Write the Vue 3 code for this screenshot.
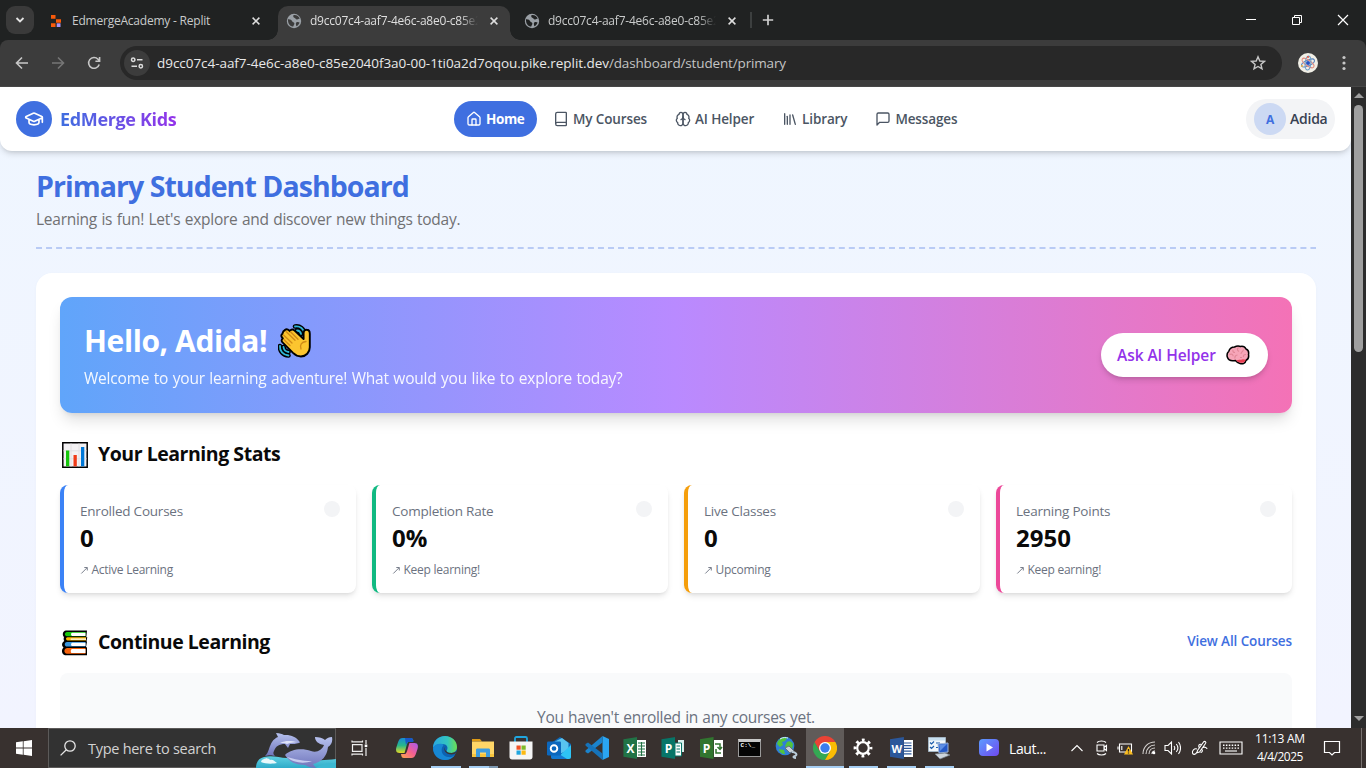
<script setup>
const tabs = [
  { title: 'EdmergeAcademy - Replit', kind: 'replit' },
  { title: 'd9cc07c4-aaf7-4e6c-a8e0-c85e2', kind: 'globe', active: true },
  { title: 'd9cc07c4-aaf7-4e6c-a8e0-c85e2', kind: 'globe' }
]
const nav = [
  { label: 'Home', active: true, d: ['M15 21v-8a1 1 0 0 0-1-1h-4a1 1 0 0 0-1 1v8', 'M3 10a2 2 0 0 1 .709-1.528l7-5.999a2 2 0 0 1 2.582 0l7 5.999A2 2 0 0 1 21 10v9a2 2 0 0 1-2 2H5a2 2 0 0 1-2-2z'] },
  { label: 'My Courses', d: ['M4 19.5v-15A2.5 2.5 0 0 1 6.5 2H19a1 1 0 0 1 1 1v18a1 1 0 0 1-1 1H6.5a1 1 0 0 1 0-5H20'] },
  { label: 'AI Helper', d: ['M12 5a3 3 0 1 0-5.997.125 4 4 0 0 0-2.526 5.77 4 4 0 0 0 .556 6.588A4 4 0 1 0 12 18Z', 'M12 5a3 3 0 1 1 5.997.125 4 4 0 0 1 2.526 5.77 4 4 0 0 1-.556 6.588A4 4 0 1 1 12 18Z', 'M15 13a4.5 4.5 0 0 1-3-4 4.5 4.5 0 0 1-3 4'] },
  { label: 'Library', d: ['m16 6 4 14', 'M12 6v14', 'M8 8v12', 'M4 4v16'] },
  { label: 'Messages', d: ['M21 15a2 2 0 0 1-2 2H7l-4 4V5a2 2 0 0 1 2-2h14a2 2 0 0 1 2 2z'] }
]
const stats = [
  { label: 'Enrolled Courses', value: '0', note: 'Active Learning', tone: 'blue' },
  { label: 'Completion Rate', value: '0%', note: 'Keep learning!', tone: 'green' },
  { label: 'Live Classes', value: '0', note: 'Upcoming', tone: 'amber' },
  { label: 'Learning Points', value: '2950', note: 'Keep earning!', tone: 'pink' }
]
</script>

<template>
  <div class="screen">
    <div class="strip">
      <div class="tabsearch"><svg width="10" height="10" viewBox="0 0 10 10"><path d="M1.5 3 5 6.5 8.5 3" fill="none" stroke="#e3e3e3" stroke-width="1.8" /></svg></div>
      <div v-for="(t, i) in tabs" :key="i" class="tab" :class="{ active: t.active }">
        <svg v-if="t.kind === 'replit'" class="fav" viewBox="0 0 16 16">
          <path d="M3 2h4.500v3.800H3zM8 6.200h5v3.600H8zM3 10.200h4.500V14H3z" fill="#f75a0b" />
          <path d="M8.700 10.300h3.800V14H8.700z" fill="#a894f5" />
        </svg>
        <svg v-else class="fav" viewBox="0 0 16 16">
          <circle cx="8" cy="8" r="7.2" fill="#9aa0a6" />
          <path d="M2 6.2c2.2-.2 3.6.6 4.2 2 .5 1.2 2.1.8 2.2 2.2.1 1.2-1 1.5-1.1 3.2-3.2-.2-5.600-3-5.300-7.400zM7.500 2c-.3 1.400-.5 2.400.8 2.700 1.500.3 1.200 1.800 2.600 1.900 1.400.1 1.500-.9 2.900-1-.9-2.400-3.300-4-6.300-3.600zM10.500 9.300c1-.5 2.300-.4 3.100.3-.6 1.900-1.700 3.100-3.200 3.700-.3-1.500-1.100-3 .1-4z" :fill="t.active ? '#3c3c3c' : '#202222'" />
        </svg>
        <span class="tabtitle" :class="{ fade: t.kind === 'globe' }">{{ t.title }}</span>
        <svg class="x" width="8" height="8" viewBox="0 0 8 8"><path d="M.6.6l6.8 6.8M7.4.6.6 7.4" stroke="#dedede" stroke-width="1.5" /></svg>
      </div>
      <i class="tabsep"></i>
      <svg class="plus" width="12" height="12" viewBox="0 0 12 12"><path d="M6 .8v10.4M.8 6h10.400" stroke="#cfcfcf" stroke-width="1.7" /></svg>
      <div class="winbtns">
        <svg width="46" height="40" viewBox="0 0 46 40"><path d="M18 19.5h10" stroke="#fff" /></svg>
        <svg width="46" height="40" viewBox="0 0 46 40"><path d="M18.500 17.500h7v7h-7zM20.500 17.500v-2h7v7h-2" fill="none" stroke="#fff" /></svg>
        <svg width="46" height="40" viewBox="0 0 46 40"><path d="m18 15 10 10M28 15 18 25" stroke="#fff" stroke-width="1.2" /></svg>
      </div>
    </div>

    <div class="toolbar-wrap"><div class="toolbar">
      <svg class="tb" viewBox="0 0 16 16"><path d="M14 8H2.800M8 2.500 2.500 8 8 13.500" stroke="#c7c7c7" /></svg>
      <svg class="tb" viewBox="0 0 16 16"><path d="M2 8h11.200M8 2.500 13.500 8 8 13.500" stroke="#767676" /></svg>
      <svg class="tb" viewBox="0 0 16 16"><path d="M13.200 9.500a5.400 5.400 0 1 1-1.200-5.300l1.500 1.600M13.600 2v4.200H9.400" stroke="#c7c7c7" /></svg>
      <div class="omni">
        <div class="site"><svg width="14" height="14" viewBox="0 0 14 14" fill="none" stroke="#dcdcdc" stroke-width="1.5"><circle cx="3.2" cy="3.7" r="1.7" /><path d="M7 3.700h5.500M1.500 10.300H7" /><circle cx="10.8" cy="10.3" r="1.7" /></svg></div>
        <span class="host">d9cc07c4-aaf7-4e6c-a8e0-c85e2040f3a0-00-1ti0a2d7oqou.pike.replit.dev</span><span class="path">/dashboard/student/primary</span>
        <svg class="star" width="16" height="16" viewBox="0 0 16 16"><path d="m8 1.800 1.800 4.200 4.600.4-3.500 3 1.100 4.500L8 11.500l-4 2.400 1.100-4.500-3.500-3 4.600-.4z" fill="none" stroke="#c7c7c7" stroke-width="1.4" /></svg>
      </div>
      <svg class="profile" width="20" height="20" viewBox="0 0 20 20">
        <circle cx="10" cy="10" r="10" fill="#f1efe6" />
        <g fill="none" stroke-width="1.1"><ellipse cx="10" cy="10" rx="7" ry="2.8" stroke="#5b84bd" transform="rotate(-25 10 10)" /><ellipse cx="10" cy="10" rx="7" ry="2.8" stroke="#e58a7c" transform="rotate(35 10 10)" /><ellipse cx="10" cy="10" rx="7" ry="2.8" stroke="#6d9fc9" transform="rotate(95 10 10)" /></g>
        <circle cx="10" cy="10" r="2" fill="#2452c4" /><circle cx="10" cy="4" r="1" fill="#e2503b" /><circle cx="4" cy="13" r="1" fill="#eeb23c" />
      </svg>
      <svg class="kebab" width="4" height="16" viewBox="0 0 4 16" fill="#c7c7c7"><circle cx="2" cy="2.5" r="1.6" /><circle cx="2" cy="8" r="1.6" /><circle cx="2" cy="13.5" r="1.6" /></svg>
    </div></div>

    <div class="viewport">
      <div class="page">
        <header>
          <div class="brand">
            <div class="logo"><svg width="20" height="20" viewBox="0 0 24 24" class="line"><path d="M21.42 10.922a1 1 0 0 0-.019-1.838L12.83 5.18a2 2 0 0 0-1.66 0L2.6 9.08a1 1 0 0 0 0 1.832l8.57 3.908a2 2 0 0 0 1.66 0zM22 10v6M6 12.5V16a6 3 0 0 0 12 0v-3.5" /></svg></div>
            <span>EdMerge Kids</span>
          </div>
          <nav>
            <a v-for="n in nav" :key="n.label" :class="{ on: n.active }">
              <svg width="16" height="16" viewBox="0 0 24 24" class="line"><path v-for="d in n.d" :key="d" :d="d" /></svg><span>{{ n.label }}</span>
            </a>
          </nav>
          <div class="user"><b>A</b><span>Adida</span></div>
        </header>

        <main>
          <div class="intro">
            <h1>Primary Student Dashboard</h1>
            <p>Learning is fun! Let's explore and discover new things today.</p>
          </div>
          <svg class="dash" width="1280" height="2"><line x1="0" y1="1" x2="1280" y2="1" stroke="#b9cbf5" stroke-width="2" stroke-dasharray="6 4.035" /></svg>

          <section class="board">
            <div class="banner">
              <div>
                <h2><span>Hello, Adida!</span>
                  <svg width="34" height="36" viewBox="0 0 34 36">
                    <g fill="none" stroke-linecap="round"><path d="M17 3.500c5-.8 9 2.200 9.500 7.500M19 7.500c2.200.1 3.700 1.500 4 3.500M2 23c-.5 5 3 9 8.500 9.500M5.500 24c.2 2.700 2 4.500 5 5" stroke="#000" stroke-width="4.6" /><path d="M17 3.500c5-.8 9 2.200 9.500 7.500M19 7.500c2.200.1 3.700 1.500 4 3.500M2 23c-.5 5 3 9 8.500 9.500M5.500 24c.2 2.700 2 4.500 5 5" stroke="#2fb6d6" stroke-width="1.8" /></g>
                    <path d="M7 7c1.800-1.600 3-.6 4.500.8l.5.4c.8-2 3-2.200 4.600-.6l9 8.400V10.500c0-2.600 1-3.800 3-3.700 2.300 0 3.200 1.600 3.200 4v13.500c0 5-3.800 9.200-8.900 9.200-3.400 0-5.600-1.400-7.900-3.600L4.800 19.700c-1.600-1.600-1.600-3 .1-4.200-2-1.900-2.200-3.300-.5-4.700C4.800 8.700 5.500 7.600 7 7z" fill="#fcc52f" stroke="#000" stroke-width="1.9" stroke-linejoin="round" />
                    <path d="m5.500 12 8.500 8M8 8.500l9 8.700M12.500 8.800l7.500 7.400M5.800 16.500l6.200 6M28 18.500c-4.500.4-6.600 3.600-5 7.500" fill="none" stroke="#d08a16" stroke-width="1.3" stroke-linecap="round" />
                  </svg>
                </h2>
                <p>Welcome to your learning adventure! What would you like to explore today?</p>
              </div>
              <button><span>Ask AI Helper</span>
                <svg width="24" height="20" viewBox="0 0 24 20">
                  <path d="M8.500 2C11 .5 13.500 1 14.500 1.500c2.500-.5 4.500.5 5.500 2.500 2.200 1 3 3.200 2.500 5.500.5 2.500-.5 5-2.600 6-.5 2.700-3 4-5.900 3-2.100-.5-3.600-1.800-4.600-3-3.400.7-6.900.2-8-3.200-.9-2.800.1-4.800 1.400-6C3.600 3.500 5.800 2 8.500 2z" fill="#f6a5b8" stroke="#000" stroke-width="1.5" />
                  <path d="M10 15.500c2.300-1 4.800-.4 6.800-1.200l3 .4c-.8 2.400-2.900 3.700-5.700 2.800-1.700-.3-3-1.100-4.100-2z" fill="#e83e52" />
                  <path d="M7 5c-.5 1.500.5 2.500 2 2.500M12.500 2.500c-1.500 1.300-1.500 3 .5 4M17.500 4.500c-.5 2.500-2.500 2.500-2.500 4.500M3.500 9.500c2-1 3.500 0 3.700 1.800M9 13.500c-.5-2 .5-3.300 2.500-3.500M20 9.500c-2-.3-3 1.200-2.500 2.700M14 12.500h2" fill="none" stroke="#e08797" stroke-width="1.1" />
                </svg>
              </button>
            </div>

            <h3>
              <svg width="28" height="28" viewBox="0 0 28 28"><path d="M1.800 1.800h24.400v24.400H1.800z" fill="#f3f1f3" stroke="#000" stroke-width="1.5" /><path d="M2.500 9.800h23M2.500 17.800h23M10 2.500v23M18 2.500v23" stroke="#e2e0e3" /><path d="M5 9.500h3.300v15.800H5z" fill="#16c60c" /><path d="M12.500 14h3.300v11.300h-3.300z" fill="#f03a17" /><path d="M20 6h3.300v19.300H20z" fill="#0078d7" /></svg>
              <span>Your Learning Stats</span>
            </h3>
            <div class="cards">
              <article v-for="s in stats" :key="s.tone" :class="s.tone">
                <p class="label">{{ s.label }}</p>
                <p class="value">{{ s.value }}</p>
                <p class="note"><svg width="9" height="9" viewBox="0 0 9 9"><path d="M1.300 7.500 7 1.800M4.300 1.500h3v3" fill="none" stroke="#6b7280" stroke-width=".9" /></svg><span>{{ s.note }}</span></p>
                <i></i>
              </article>
            </div>

            <h3 class="second">
              <svg width="28" height="28" viewBox="0 0 28 28">
                <path d="M26 1.500H5C1.500 2 1 6 3 8c-.5 1.500-.5 3 .3 4C.5 13.500.5 17 2.500 18.500 0 20.500.5 25.500 4 26.200h22v-8h-1l1-5.500-.5-.500.800-4h-1z" fill="#000" />
                <path d="M24.500 2.900H6c-2.800.3-2.800 4 0 4.300h18.500z" fill="#16c60c" />
                <path d="M25 8.300H6.500c-2 .2-2 2.900 0 3.200H25z" fill="#ffb900" />
                <path d="M24.500 12.900H6c-3 .4-3 4.300 0 4.700h18.500z" fill="#3a96dd" />
                <path d="M24.500 19H6c-3.500.5-3.500 5.400 0 5.800h18.500z" fill="#f7630c" />
                <path d="M24.500 3.700H11c-1.300.4-1.300 2.800 0 3.200h13.500zM25 9.500H10c-.6.300-.6 1 0 1.300h15zM24.500 13.800H11c-1.300.4-1.300 2.900 0 3.300h13.500zM24.500 19.900H11c-1.600.5-1.600 3.700 0 4.200h13.500z" fill="#fff" />
              </svg>
              <span>Continue Learning</span>
              <a>View All Courses</a>
            </h3>
            <div class="empty">You haven't enrolled in any courses yet.</div>
          </section>
        </main>
      </div>
      <div class="scroll"><i class="up"></i><i class="thumb"></i><i class="down"></i></div>
    </div>

    <footer>
      <div class="start"><svg width="16" height="16" viewBox="0 0 16 16" fill="#fff"><path d="M0 2.300 6.800 1.300v6.300H0zM7.600 1.200 16 0v7.600H7.600zM0 8.400h6.800v6.300L0 13.700zM7.600 8.400H16V16l-8.400-1.200z" /></svg></div>
      <div class="search">
        <svg width="16" height="16" viewBox="0 0 16 16" fill="none" stroke="#e6e6e6" stroke-width="1.3"><circle cx="10" cy="6" r="5.2" /><path d="M6.300 9.700.6 15.400" /></svg>
        <span>Type here to search</span>
        <svg class="dolphins" width="80" height="36" viewBox="0 0 80 36">
          <defs>
            <linearGradient id="dolphinSkin" x1="0" y1="0" x2="0" y2="1"><stop offset="0" stop-color="#b6c1ee" /><stop offset="1" stop-color="#6f74bb" /></linearGradient>
            <linearGradient id="sea" x1="0" y1="0" x2="0" y2="1"><stop offset="0" stop-color="#5fd0e2" /><stop offset="1" stop-color="#2fabc9" /></linearGradient>
          </defs>
          <path d="M0 36c0-6 3-10 8-11 9-2 15 1 23 1 10 0 16-1 23 1 9 2 16 1 26 0v9z" fill="url(#sea)" />
          <path d="M5 30c1-4 4-2 5-4 2 1 3 0 4 2 3-1 4 1 7 3-4 1-12 1-16-1z" fill="#e8f8fb" />
          <path d="M9 24c2-2 3-4 4-7 2-6 4-10 9-12l-2-4c4 0 6 1 8 2 7-.5 12 2 15 6 1 1 1 2 0 2-3 1-6 1-9 1l-2 4-3-4c-6 0-9 2-11 7-1 2-1 3 1 5-4-1-6-1-10 0z" fill="url(#dolphinSkin)" />
          <path d="M24 11c6-3 11-2 18-1l-8 1-3 1-3-1z" fill="#dfe3f8" />
          <path d="M29 23c6-6 17-7 26-4 6 2 11-1 13-6-6-1-9-4-9-8 4 0 8 1 10 3 2-2 4-3 7-3 1 5-1 8-4 10-1 9-6 15-15 17l3 4c-4 0-8-1-11-3-9 0-16-3-20-10z" fill="url(#dolphinSkin)" />
          <path d="M31 25c8 2 14 4 25 4-8 3-19 2-25-4z" fill="#c8cdf0" />
          <path d="M60 36c5-4 12-5 20-5v5z" fill="#3bb8d2" />
        </svg>
      </div>
      <div class="task"><svg width="18" height="16" viewBox="0 0 18 16" fill="none" stroke="#eee" stroke-width="1.2"><path d="M1.500 4.600h9.500v6.800H1.500zM1 .5v1.400h10.500V.5M1 15.500v-1.400h10.500v1.400M15 0v4M15 8v8" /><path d="M13.700 4.500h2.600v2.600h-2.600z" fill="#fff" stroke="none" /></svg></div>

      <div class="apps">
        <div><svg width="24" height="24" viewBox="0 0 24 24"><defs><linearGradient id="cpA" x1="0" y1="0" x2="0" y2="1"><stop offset="0" stop-color="#168bd6" /><stop offset=".5" stop-color="#28b88a" /><stop offset="1" stop-color="#e5da24" /></linearGradient><linearGradient id="cpB" x1="1" y1="0" x2="0" y2="1"><stop offset="0" stop-color="#a85af0" /><stop offset=".5" stop-color="#f45f90" /><stop offset="1" stop-color="#fba94b" /></linearGradient></defs><path d="M7.500 2H16c1.500 0 2 1 2.500 3h-4C12 5 11 13 9.500 17H4.500C1 17 .5 14 1.500 11 3 7 3.500 2 7.500 2z" fill="url(#cpA)" /><path d="M10 2h6c1.500 0 2 1 2.500 4h-5C12 6 11.500 8 11 9.500z" fill="#1857c7" /><path d="M16.500 22H9c-2 0-2.500-1-3-4h4C12 18 13 11 14.500 7H19.500c3.500 0 4 3 3 6-1.500 4-2 9-6 9z" fill="url(#cpB)" /></svg></div>
        <div class="run w30"><svg width="24" height="24" viewBox="0 0 24 24"><defs><linearGradient id="edgeG" x1="0" y1="0" x2="1" y2="0"><stop offset="0" stop-color="#2ba6df" /><stop offset=".6" stop-color="#33c6c0" /><stop offset="1" stop-color="#6ddf50" /></linearGradient></defs><circle cx="12" cy="12" r="12" fill="#0d62b1" /><path d="M0 12C0 5 5 0 12 0s12 5 12 11c0 4-3 6-6.500 6-3 0-4.500-1.500-3.500-3 1.500-3-.5-6-4.500-6C5 8 1 10 0 12z" fill="url(#edgeG)" /><path d="M10 10c-3 4-1 10 5 11 3 .5 5-.5 7-2-2 3-6 5-10 5C5 24 0 18.500 0 12c1-3 4.500-4.500 8-4.200 2 .2 3 1 2 2.200z" fill="#1787d4" /><path d="M12.500 10.500c-1.500 2.500 0 5.500 4 6.300 3 .4 5-.3 7-1.500l-1 2.200c-3 1.200-6 1.500-9-.5-2.500-1.700-2.500-4.500-1-6.500z" fill="#3a3432" /></svg></div>
        <div class="run split w29"><svg width="22" height="20" viewBox="0 0 22 20"><path d="M0 1h8l2 2.500H0z" fill="#df9b16" /><path d="M0 3.500h22V19H0z" fill="#ffd667" /><path d="M0 16h22v3H0z" fill="#f8c43c" /><path d="M4 19v-7c0-1 .5-1.500 1.500-1.500h11c1 0 1.500.5 1.500 1.500v7h-4v-4.500H8V19z" fill="#3d9ce0" /></svg></div>
        <div><svg width="24" height="24" viewBox="0 0 24 24"><path d="M6 6V2.500C6 1.500 6.500 1 7.500 1h9c1 0 1.500.5 1.500 1.500V6" fill="none" stroke="#20a6df" stroke-width="1.8" /><path d="M.5 5.500h23V21c0 1.500-1 2.500-2.500 2.500H3C1.500 23.500.5 22.500.5 21z" fill="#f5f5f5" /><path d="M7.500 9.500h4.200v4.200H7.500z" fill="#f15125" /><path d="M12.500 9.500h4.200v4.200h-4.200z" fill="#7eba28" /><path d="M7.500 14.500h4.200v4.200H7.500z" fill="#20a6df" /><path d="M12.500 14.500h4.200v4.200h-4.200z" fill="#fcb912" /></svg></div>
        <div><svg width="24" height="24" viewBox="0 0 24 24"><path d="m13 1 11 7v13c0 1-1 2-2 2H6c-1 0-2-1-2-2V7z" fill="#1066b5" /><path d="M8 5.500 15 2l6.500 5v7L8 20z" fill="#59c3f0" /><path d="M24 9v12c0 1-1 2-2 2H9z" fill="#2ec4f5" /><path d="M4 13 20 23H6c-1 0-2-1-2-2z" fill="#1479d1" /><rect y="5.5" width="14" height="14" rx="1.2" fill="#0b67bd" /><circle cx="7" cy="12.5" r="3.3" fill="none" stroke="#fff" stroke-width="1.9" /></svg></div>
        <div><svg width="24" height="24" viewBox="0 0 24 24"><path d="M17.500 0 24 3v18l-6.500 3z" fill="#2aa5f2" /><path d="M17.500 0v6.500L3 17.500.5 16v-1.500z" fill="#1b83cc" /><path d="M17.500 24v-6.500L3 6.500.5 8v1.500z" fill="#1673ba" /></svg></div>
        <div><div class="office xl"><b>X</b><svg width="9" height="17" viewBox="0 0 9 17"><path d="M0 0h9v17H0z" fill="#fff" /><path d="M1 3h7M1 6h7M1 9h7M1 12h7M1 15h7M4.500 2v14" stroke="#217346" stroke-width="1.1" /></svg></div></div>
        <div><div class="office pub"><b>P</b><svg width="9" height="17" viewBox="0 0 9 17"><path d="M3 0h6v12H3z" fill="#d8efec" /><path d="M0 3h6.500v13H0z" fill="#fff" stroke="#077568" /><path d="M1.500 6h3.500M1.500 9h3.500M1.500 12h3.500" stroke="#077568" /></svg></div></div>
        <div><div class="office proj"><b>P</b><svg width="9" height="17" viewBox="0 0 9 17"><path d="M0 0h9v17H0z" fill="#fff" /><path d="M1 4h5v5M3.500 7 6 9.500 8 7M7 13H2V9" fill="none" stroke="#31752f" stroke-width="1.5" /></svg></div></div>
        <div><div class="cmd">C:\_</div></div>
        <div><svg width="24" height="24" viewBox="0 0 24 24"><circle cx="10" cy="10" r="9.3" fill="#2f7fd6" /><path d="M3 5c3-4 7-4 9-3l-2 3-3 1 1 3-3 2-3-3zM12 6c3-2 5 0 6 2l-1 5-4 1-3-4zM4 13l5 1 1 4C7 18 4 16 4 13z" fill="#52c33c" /><path d="M5 3c3-2 6-1.500 8-1" stroke="#d6f2ff" fill="none" /><path d="m10 12 4-2 5 5-4 2z" fill="#c8d1d8" stroke="#65727c" /><path d="M17 16c4 0 6 3 3 4s-1 2 1 2" fill="none" stroke="#b9cbd8" stroke-width="2" /></svg></div>
        <div class="run chrome"><svg width="24" height="24" viewBox="0 0 24 24"><path d="m12 12 5.200 3L12 24A12 12 0 0 1 1.600 6l5.200 9z" fill="#34a853" /><path d="M12 6h10.400a12 12 0 0 0-20.800 0l5.200 9z" fill="#ea4335" /><path d="M17.200 15 12 24A12 12 0 0 0 22.400 6H12z" fill="#fbbc04" /><circle cx="12" cy="12" r="6" fill="#fff" /><circle cx="12" cy="12" r="4.7" fill="#3b7ded" /></svg></div>
        <div class="run w29"><svg width="20" height="20" viewBox="0 0 20 20" fill="none" stroke="#fff"><circle cx="10" cy="10" r="5.8" stroke-width="2.2" /><circle cx="10" cy="10" r="8" stroke-width="2.8" stroke-dasharray="2.8 3.483" stroke-dashoffset="1.4" /></svg></div>
        <div class="run w29"><div class="office word"><b>W</b><svg width="9" height="17" viewBox="0 0 9 17"><path d="M0 0h9v17H0z" fill="#fff" /><path d="M0 3h7.500M0 5.700h7.500M0 8.400h7.500M0 11.100h7.500M0 13.800h7.500" stroke="#2b579a" stroke-width="1.2" /></svg></div></div>
        <div class="run w29"><svg width="24" height="24" viewBox="0 0 24 24"><path d="M1.500 1.500h17v14h-17z" fill="#f2f7fb" stroke="#a3b5c4" /><path d="M2 2h16v2.500H2z" fill="#c7dff0" /><path d="m3 6.500 1.500 1.500L7 5.500M3 11l1.500 1.500L7 10M9 7h4M9 11.500h3" stroke="#1d5dab" fill="none" stroke-width="1.2" /><path d="m11 8 10-1v9l-9 1z" fill="#2459c8" stroke="#9db4d8" /><path d="m12 8.500 8-.5-7 7z" fill="#5d8fe6" /><path d="m8 18 10-1 5 2-10 4z" fill="#cdd5dd" stroke="#75818d" stroke-width=".7" /></svg></div>
      </div>

      <div class="widget"><svg width="20" height="18" viewBox="0 0 20 18"><defs><linearGradient id="play" x1="0" y1="0" x2="1" y2="1"><stop offset="0" stop-color="#5b9cff" /><stop offset="1" stop-color="#7048ee" /></linearGradient></defs><rect width="20" height="17" rx="4" fill="url(#play)" /><path d="M7.500 4.500v8l6.500-4z" fill="#fff" /></svg><span>Laut...</span></div>
      <div class="tray">
        <svg class="s0" width="14" height="20" viewBox="0 0 14 20"><path d="M1.500 13 7 7.500l5.500 5.500" /></svg>
        <svg class="s1" width="14" height="20" viewBox="0 0 14 20"><path d="M2 7h7v6H2zM9 9.500l2.500-2v5L9 10.500M2 4.500C4 2.500 9 2.500 11 4.500M2 15.500c2 2 7 2 9 0" /></svg>
        <svg class="s2" width="18" height="20" viewBox="0 0 18 20"><path d="M2.500 6h12v8h-12zM1 8.500v3M4.800 8v4" /><path d="m11.500 8 4.500 8.500H7z" fill="#fbbd20" stroke="none" /><path d="M11.500 11v2.500M11.500 14.500v1" stroke="#222" stroke-width="1.3" /></svg>
        <svg class="s3" width="14" height="20" viewBox="0 0 14 20"><path d="M1 16C1 9 6 4 13 4M4 16c0-5 4-9 9-9M7 16c0-3.500 2.500-6 6-6" stroke="#d5d2d0" /><path d="M10 16c0-1.800 1.200-3 3-3" /><circle cx="12" cy="15" r="1.3" fill="#fff" stroke="none" /></svg>
        <svg class="s4" width="17" height="20" viewBox="0 0 17 20"><path d="M1 7.500h3L7.500 4v12L4 12.500H1zM10 8c1 1.300 1 2.700 0 4M12.300 6c2 2.500 2 5.500 0 8M14.500 4c2.700 3.500 2.700 8.500 0 12" /></svg>
        <svg class="s5" width="17" height="20" viewBox="0 0 17 20"><path d="M6.500 12.500 12.500 4c1.500-1.500 3 0 2 1.500L8.500 14l-2.500.800zM6 11c-3-1-5 2-4.500 4s3 2 4.500-1M8 9.500C7 7 9 5.500 10 6.500M12 9.500c2-1 4 .500 4 1.500M11 11.500c1 1.500 0 3-1.500 3" /></svg>
        <svg class="s6" width="24" height="20" viewBox="0 0 24 20"><path d="M1 4h22v12H1z" /><path d="M4 7.300h16M4 10.100h16" stroke-width="1.400" stroke-dasharray="1.500 1.400" /><path d="M6 13h12" /></svg>
      </div>
      <div class="clock"><span>11:13 AM</span><span class="date">4/4/2025</span></div>
      <svg class="notif" width="18" height="18" viewBox="0 0 18 18"><path d="M1.500 2.500h15v11h-5L9 16l-2.500-2.500h-5z" fill="none" stroke="#fff" stroke-width="1.2" /></svg>
      <i class="edge"></i>
    </footer>
  </div>
</template>

<style>
body { margin: 0; overflow: hidden; }
</style>

<style scoped>
* { box-sizing: border-box; }
.screen { width: 1366px; height: 768px; display: grid; grid-template-rows: 40px 47px 641px 40px; overflow: hidden; white-space: nowrap; font-family: "Open Sans", "Noto Sans", sans-serif; }
svg { flex: none; display: block; }
h1, h2, h3, p { margin: 0; }

.strip { background: #202222; display: flex; align-items: center; }
.tabsearch { width: 28px; height: 28px; margin-left: 6px; border-radius: 9px; background: #3a3a3a; display: grid; place-items: center; }
.tab { height: 34px; align-self: flex-end; display: flex; align-items: center; padding: 0 12px 5px 8px; width: 232px; color: #c9cbcb; position: relative; }
.tabsearch + .tab { margin: 0 6px; }
.tab.active { background: #3c3c3c; color: #dfdfdf; border-radius: 10px 10px 0 0; }
.tab.active + .tab { margin-left: 6px; }
.tab.active::before, .tab.active::after { content: ""; position: absolute; bottom: 0; width: 10px; height: 10px; }
.tab.active::before { left: -10px; background: radial-gradient(circle at 0 0, transparent 9.5px, #3c3c3c 10px); }
.tab.active::after { right: -10px; background: radial-gradient(circle at 100% 0, transparent 9.5px, #3c3c3c 10px); }
.fav { width: 16px; height: 16px; margin-right: 8px; }
.tabtitle { font-size: 12px; letter-spacing: -.22px; flex: 1; overflow: hidden; line-height: 20px; }
.fade { -webkit-mask: linear-gradient(90deg, #000 150px, transparent 168px); mask: linear-gradient(90deg, #000 150px, transparent 168px); }
.x { margin: 1px 0 0 8px; }
.tabsep { width: 2px; height: 16px; background: #3c3f3f; margin-left: 2px; }
.plus { margin-left: 10px; }
.winbtns { margin-left: auto; display: flex; }

.toolbar-wrap { background: #202222; }
.toolbar { height: 47px; background: #3c3c3c; border-radius: 8px 8px 0 0; border-bottom: 1px solid #474747; display: flex; align-items: center; padding-left: 14px; }
.tb { width: 16px; height: 16px; margin-right: 20px; fill: none; stroke-width: 1.6; }
.tb:nth-child(3) { margin-right: 18px; }
.omni { width: 1162px; height: 34px; border-radius: 17px; background: #282828; display: flex; align-items: center; padding-left: 4px; color: #e8e8e8; font-size: 13.5px; }
.site { width: 26px; height: 26px; border-radius: 50%; background: #3c3c3c; display: grid; place-items: center; margin-right: 7px; }
.host { letter-spacing: -.05px; }
.path { letter-spacing: -.15px; color: #c4c4c4; }
.host, .path { padding-bottom: 1px; }
.star { margin: 0 16px 0 auto; }
.profile { margin-left: 16px; }
.kebab { margin-left: 24px; }

.viewport { display: flex; overflow: hidden; }
.page { width: 1351px; background: linear-gradient(#eff6ff, #f2f4ff); overflow: hidden; }
header { height: 64px; background: #fff; border-radius: 0 0 12px 12px; box-shadow: 0 4px 6px -1px rgba(0,0,0,.13), 0 2px 4px -2px rgba(0,0,0,.13); display: flex; align-items: center; padding: 0 16px; position: relative; }
.line { fill: none; stroke: currentColor; stroke-width: 2; stroke-linecap: round; stroke-linejoin: round; }
.brand { display: flex; align-items: center; width: 438px; font-size: 18px; font-weight: 700; letter-spacing: -.35px; }
.brand span { background: linear-gradient(90deg, #3f6fe0, #9333ea); -webkit-background-clip: text; background-clip: text; color: transparent; }
.logo { width: 36px; height: 36px; border-radius: 50%; background: #3f6fe0; color: #fff; display: grid; place-items: center; margin-right: 8px; }
nav { display: flex; gap: 4px; }
nav a { height: 36px; padding: 0 12px; border-radius: 18px; display: flex; align-items: center; gap: 4px; font-size: 13.5px; font-weight: 600; letter-spacing: -.13px; color: #4b5563; }
nav a span, .user span { padding-bottom: 1px; }
nav a.on { background: #3f6fe0; color: #fff; font-weight: 700; letter-spacing: -.4px; width: 83px; }
.user { margin-left: auto; height: 40px; width: 89px; border-radius: 20px; background: #f3f4f6; display: flex; align-items: center; padding-left: 8px; font-size: 14px; font-weight: 600; letter-spacing: -.25px; color: #374151; }
.user b { width: 32px; height: 32px; border-radius: 50%; background: #ccd9f3; color: #3f6fe0; display: grid; place-items: center; margin-right: 4px; font-size: 12px; font-weight: 700; }

main { padding: 0 35px 0 36px; }
.intro { padding-top: 17px; }
h1 { font-size: 28.5px; line-height: 36px; font-weight: 700; letter-spacing: -.95px; color: #3f6fe0; }
.intro p { font-size: 15.5px; line-height: 24px; letter-spacing: -.26px; word-spacing: .7px; color: #717173; margin-top: 3px; }
.dash { margin: 16px 0 24px; }
.board { background: #fff; border-radius: 16px; height: 700px; padding: 24px; box-shadow: 0 1px 3px rgba(80,90,140,.04); }
.banner { height: 116px; border-radius: 12px; background: linear-gradient(90deg, #60a5fa, #b98aff 50%, #f472b6); box-shadow: 0 10px 15px -3px rgba(0,0,0,.13), 0 4px 6px -4px rgba(0,0,0,.13); color: #fff; display: flex; justify-content: space-between; align-items: center; padding: 2px 24px 0; }
h2 { font-size: 30px; line-height: 36px; font-weight: 700; letter-spacing: -.4px; display: flex; align-items: center; gap: 11px; }
.banner p { font-size: 15.5px; line-height: 24px; letter-spacing: -.21px; word-spacing: .7px; margin-top: 7px; opacity: .92; }
button { font: 600 15.5px "Open Sans", sans-serif; letter-spacing: -.08px; height: 44px; width: 167px; border: 0; border-radius: 22px; background: #fff; color: #9333ea; padding: 0 0 0 16px; margin-bottom: 2px; display: flex; align-items: center; gap: 10px; box-shadow: 0 4px 6px -1px rgba(0,0,0,.14), 0 2px 4px -2px rgba(0,0,0,.14); }
h3 { height: 34px; margin: 24px 0 14px; display: flex; align-items: center; font-size: 19.5px; font-weight: 700; letter-spacing: -.46px; color: #0a0a0a; }
h3 span { padding-bottom: 2px; }
h3 svg { margin: 1px 9px 0 1px; }
h3.second { margin: 32px 0 14px; }
h3 a { margin-left: auto; padding-bottom: 3px; font-size: 13.5px; font-weight: 600; letter-spacing: -.11px; color: #3f6fe0; }
.cards { display: grid; grid-template-columns: repeat(4, 296px); gap: 16px; }
article { height: 108px; border-left: 4px solid; border-radius: 8px; padding: 16px; box-shadow: 0 4px 6px -1px rgba(0,0,0,.1), 0 2px 4px -2px rgba(0,0,0,.1); position: relative; }
article i { position: absolute; right: 16px; top: 16px; width: 16px; height: 16px; border-radius: 50%; background: #f3f4f6; }
.blue { border-color: #3b82f6; } .green { border-color: #10b981; } .amber { border-color: #f59e0b; } .pink { border-color: #ec4899; }
.label { font-size: 13.5px; line-height: 20px; letter-spacing: -.22px; color: #6b7280; }
.value { font-size: 24px; line-height: 32px; font-weight: 700; color: #0a0a0a; margin-top: 1px; }
.note { font-size: 12px; line-height: 16px; letter-spacing: -.26px; color: #6b7280; display: flex; align-items: center; gap: 2.5px; margin-top: 8px; }
.empty { height: 160px; border-radius: 8px; background: #f9fafb; color: #6b7280; font-size: 15.5px; letter-spacing: -.31px; word-spacing: .7px; text-align: center; padding-top: 32px; line-height: 24px; }
.scroll { width: 15px; background: #2c2c2c; display: flex; flex-direction: column; align-items: center; }
.up, .down { border: 5px solid transparent; }
.up { border-top: 0; border-bottom-color: #9f9f9f; margin-top: 6px; }
.down { border-bottom: 0; border-top-color: #9f9f9f; margin: auto 0 7px; }
.thumb { width: 9px; height: 247px; border-radius: 5px; background: #9f9f9f; margin-top: 7px; }

footer { background: #38312f; display: flex; align-items: center; color: #fff; }
.start { width: 48px; display: grid; place-items: center; }
.search { width: 288px; height: 40px; border: 1px solid #5c5a59; background: #323232; display: flex; align-items: center; padding-left: 11px; font-size: 14.5px; letter-spacing: -.28px; color: #d2d2d2; gap: 12px; }
.dolphins { margin: 3px -1px 0 auto; }
.task { width: 48px; display: grid; place-items: center; }
.apps { display: flex; margin-left: 3.5px; height: 40px; }
.apps > div { width: 38.07px; display: grid; place-items: center; position: relative; }
.run::after { content: ""; position: absolute; bottom: 0; left: 5px; width: 29px; height: 2px; background: #a5cdf2; }
.run.w30::after { width: 30px; }
.run.split::after { background: linear-gradient(90deg, #a5cdf2 20px, #7d97b0 20px); }
.chrome { background: #605b59; }
.run.chrome::after { left: 0; width: 38px; }
.office { width: 23px; height: 22px; display: flex; align-items: center; }
.office b { width: 14px; height: 22px; display: grid; place-items: center; font-size: 12px; clip-path: polygon(0 10%, 100% 0, 100% 100%, 0 90%); }
.xl b { background: #217346; } .pub b { background: #077568; } .proj b { background: #31752f; } .word b { background: #2b579a; font-size: 11px; }
.cmd { width: 23px; height: 18px; border: 1px solid #9a9a9a; border-top: 3px solid #c9c9c9; background: #050505; font: 700 6px/7px "Liberation Mono", monospace; padding-left: 2px; }
.widget { display: flex; align-items: center; gap: 10px; margin-left: 20.5px; font-size: 14px; letter-spacing: -.35px; width: 88px; }
.tray { display: flex; fill: none; stroke: #fff; stroke-width: 1.1; }
.s0 { margin-left: 3px; } .s1 { margin-left: 11px; } .s2 { margin-left: 8px; } .s3 { margin-left: 7px; } .s4 { margin-left: 8px; } .s5 { margin-left: 10px; } .s6 { margin-left: 11px; }
.clock { display: flex; flex-direction: column; align-items: center; font-size: 12px; line-height: 18px; letter-spacing: -.3px; width: 52px; margin-left: 11px; }
.date { letter-spacing: -.5px; }
.notif { margin-left: 17px; }
.edge { width: 1px; height: 40px; background: #77716f; margin-left: auto; margin-right: 4px; }
</style>
